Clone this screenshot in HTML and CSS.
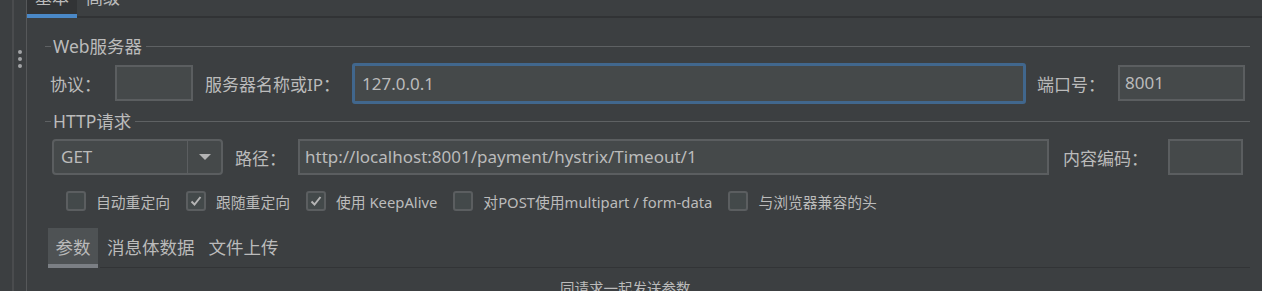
FILE: index.html
```html
<!DOCTYPE html>
<html lang="zh">
<head>
    <meta charset="UTF-8">
    <meta name="viewport" content="width=device-width, initial-scale=1.0">
    <title>HTTP请求</title>
    <link rel="stylesheet" href="styles.css">
</head>
<body>
    <div class="rail"></div>
    <div class="handle">
        <span class="dot"></span>
        <span class="dot"></span>
        <span class="dot"></span>
    </div>
    <div class="main">
        <div class="tabbar">
            <div class="tab selected">基本</div>
            <div class="tab">高级</div>
            <div class="tabfill"></div>
        </div>

        <div class="panel">
            <div class="legend">
                <span class="dash"></span>
                <span class="legend-text">Web服务器</span>
                <span class="rule"></span>
            </div>
            <div class="row server-row">
                <label class="lbl">协议：</label>
                <div class="field protocol"></div>
                <label class="lbl gap-l">服务器名称或IP：</label>
                <div class="field focused grow">127.0.0.1</div>
                <label class="lbl port-lbl">端口号：</label>
                <div class="field port">8001</div>
            </div>

            <div class="legend http-legend">
                <span class="dash"></span>
                <span class="legend-text">HTTP请求</span>
                <span class="rule"></span>
            </div>
            <div class="row request-row">
                <div class="combo">
                    <span class="combo-value">GET</span>
                    <span class="combo-arrow"><span class="tri"></span></span>
                </div>
                <label class="lbl gap-l">路径：</label>
                <div class="field grow">http://localhost:8001/payment/hystrix/Timeout/1</div>
                <label class="lbl gap-l enc-lbl">内容编码：</label>
                <div class="field encoding"></div>
            </div>

            <div class="checks">
                <div class="check"><span class="box"></span>自动重定向</div>
                <div class="check"><span class="box on"><svg width="16" height="16" viewBox="0 0 16 16"><path d="M3.5 8.5 L6.5 11.5 L12.5 4" fill="none" stroke="#b4b4b4" stroke-width="2"/></svg></span>跟随重定向</div>
                <div class="check"><span class="box on"><svg width="16" height="16" viewBox="0 0 16 16"><path d="M3.5 8.5 L6.5 11.5 L12.5 4" fill="none" stroke="#b4b4b4" stroke-width="2"/></svg></span>使用 KeepAlive</div>
                <div class="check"><span class="box"></span>对POST使用multipart / form-data</div>
                <div class="check"><span class="box"></span>与浏览器兼容的头</div>
            </div>

            <div class="subtabs">
                <div class="subtab selected">参数</div>
                <div class="subtab">消息体数据</div>
                <div class="subtab">文件上传</div>
                <div class="subfill"></div>
            </div>
            <div class="hint">同请求一起发送参数</div>
        </div>
    </div>
</body>
</html>
```

FILE: styles.css
```css
*{
  box-sizing: border-box;
}
html, body{
  height: 100%;
}
body{
  margin: 0;
  display: flex;
  background-color: #3c3f41;
  color: #bbbbbb;
  font-family: "Noto Sans", "Noto Sans CJK SC", sans-serif;
  font-size: 17px;
  overflow: hidden;
}
.rail{
  width: 14px;
  border-right: 2px solid #4a4c4e;
}
.handle{
  width: 13px;
  border-right: 1px solid #56585a;
  display: flex;
  flex-direction: column;
  align-items: center;
  gap: 3px;
  padding-top: 50px;
}
.handle .dot{
  width: 4px;
  height: 4px;
  border-radius: 50%;
  background-color: #a2a4a6;
}
.main{
  flex: 1;
  display: flex;
  flex-direction: column;
}
.main > *, .panel > *{
  flex-shrink: 0;
}
.tabbar{
  display: flex;
  height: 18px;
  overflow: hidden;
}
.tab{
  padding: 0 9px;
  line-height: 16px;
  margin-top: -10px;
  white-space: nowrap;
}
.tab.selected{
  width: 50px;
  padding: 0;
  text-align: center;
  background-color: #323436;
  border-bottom: 4px solid #4a88c7;
  height: 28px;
}
.tab:not(.selected){
  height: 28px;
  border-bottom: 2px solid #313335;
}
.tabfill{
  flex: 1;
  border-bottom: 2px solid #313335;
}
.panel{
  padding: 0 12px 0 18px;
  display: flex;
  flex-direction: column;
}
.legend{
  display: flex;
  align-items: center;
  height: 20px;
  margin-top: 18px;
  font-size: 17.5px;
}
.http-legend{
  margin-top: 7px;
}
.dash{
  width: 6px;
  border-top: 1px solid #5e6163;
}
.legend-text{
  margin: 0 4px 0 2px;
  line-height: 20px;
}
.rule{
  flex: 1;
  border-top: 1px solid #5e6163;
}
.row{
  display: flex;
  align-items: center;
  padding-left: 5px;
  padding-right: 5px;
}
.server-row{
  margin-top: 6px;
  height: 42px;
}
.request-row{
  margin-top: 8px;
  height: 36px;
  padding-left: 7px;
  padding-right: 7px;
}
.lbl{
  white-space: nowrap;
  margin-right: 12px;
}
.gap-l{
  margin-left: 12px;
}
.port-lbl{
  margin-left: 11px;
  margin-right: 12px;
}
.enc-lbl{
  margin-left: 14px;
  margin-right: 10px;
}
.field{
  height: 36px;
  line-height: 32px;
  padding: 0 5px;
  background-color: #45494a;
  border: 2px solid #5b5e60;
  white-space: nowrap;
  overflow: hidden;
}
.grow{
  flex: 1;
}
.field.focused{
  height: 41px;
  line-height: 35px;
  padding: 0 7px;
  border: 3px solid #41678d;
  border-radius: 3px;
}
.protocol{
  width: 78px;
  margin-left: 2px;
}
.port{
  width: 127px;
  margin-left: 1px;
}
.encoding{
  width: 75px;
  margin-left: 10px;
}
.combo{
  width: 171px;
  height: 36px;
  display: flex;
  background-color: #45494a;
  border: 2px solid #5b5e60;
  border-radius: 4px;
}
.combo-value{
  flex: 1;
  padding-left: 7px;
  line-height: 32px;
  border-right: 1px solid #5b5e60;
}
.combo-arrow{
  width: 33px;
  display: flex;
  align-items: center;
  justify-content: center;
}
.tri{
  width: 0;
  height: 0;
  border-left: 6px solid transparent;
  border-right: 6px solid transparent;
  border-top: 6px solid #b4b4b4;
}
.checks{
  display: flex;
  align-items: center;
  height: 22px;
  margin-top: 15px;
  padding-left: 21px;
  gap: 16px;
}
.check{
  display: flex;
  align-items: center;
  font-size: 14.8px;
  white-space: nowrap;
}
.box{
  width: 20px;
  height: 20px;
  margin-right: 10px;
  border: 2px solid #5b5e60;
  border-radius: 3px;
  background-color: #43494a;
  display: flex;
  align-items: center;
  justify-content: center;
}
.subtabs{
  display: flex;
  height: 40px;
  margin-top: 16px;
  margin-left: 3px;
  font-size: 17.5px;
}
.subtab{
  padding: 0 7px;
  line-height: 38px;
  border-bottom: 1px solid #323436;
}
.subtab.selected{
  width: 50px;
  padding: 0;
  text-align: center;
  background-color: #4e5254;
  border-bottom: 4px solid #7b7f84;
  margin-right: 2px;
}
.subfill{
  flex: 1;
  border-bottom: 1px solid #323436;
}
.hint{
  margin-top: 10px;
  padding-left: 515px;
  line-height: 20px;
  font-size: 14.5px;
}
```
